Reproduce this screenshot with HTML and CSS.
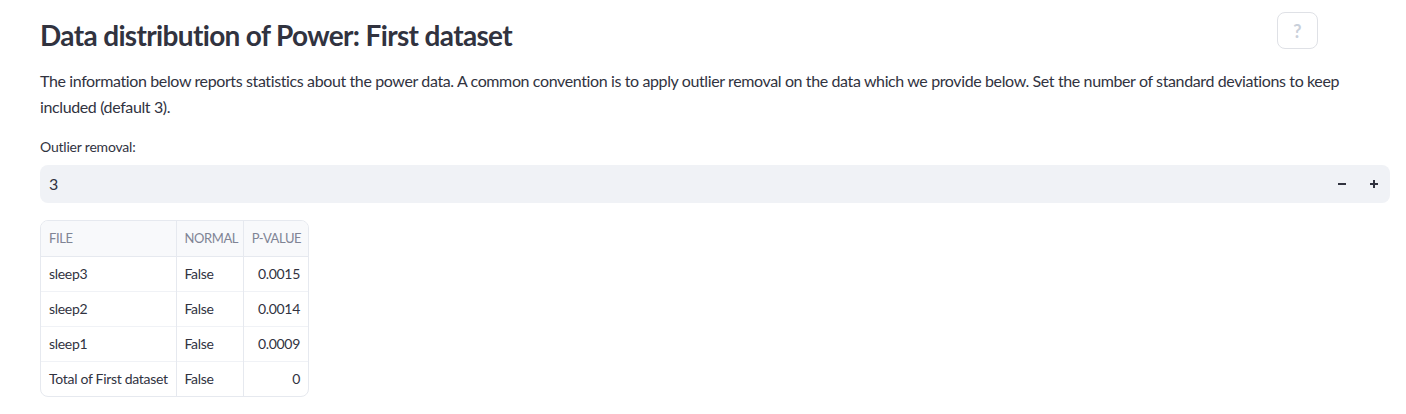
FILE: index.html
```html
<!DOCTYPE html>
<html>
<head>
<meta charset="utf-8">
<link rel="stylesheet" href="styles.css">
</head>
<body>
<div class="page">
  <div class="header-row">
    <h3 class="title">Data distribution of Power: First dataset</h3>
    <button class="help">?</button>
  </div>
  <p class="desc">The information below reports statistics about the power data. A common convention is to apply outlier removal on the data which we provide below. Set the number of standard deviations to keep included (default 3).</p>
  <label class="label">Outlier removal:</label>
  <div class="numinput">
    <span class="value">3</span>
    <div class="steps">
      <span class="step"><svg width="10" height="10" viewBox="0 0 10 10"><rect x="1" y="4" width="8" height="2" fill="#31333f"/></svg></span>
      <span class="step"><svg width="10" height="10" viewBox="0 0 10 10"><rect x="1" y="4" width="8" height="2" fill="#31333f"/><rect x="4" y="1" width="2" height="8" fill="#31333f"/></svg></span>
    </div>
  </div>
  <div class="tablewrap">
    <table class="tbl">
      <thead>
        <tr><th class="c1">FILE</th><th class="c2">NORMAL</th><th class="c3">P-VALUE</th></tr>
      </thead>
      <tbody>
        <tr><td>sleep3</td><td>False</td><td class="num">0.0015</td></tr>
        <tr><td>sleep2</td><td>False</td><td class="num">0.0014</td></tr>
        <tr><td>sleep1</td><td>False</td><td class="num">0.0009</td></tr>
        <tr><td>Total of First dataset</td><td>False</td><td class="num">0</td></tr>
      </tbody>
    </table>
  </div>
</div>
</body>
</html>
```

FILE: styles.css
```css
html, body {
  margin: 0;
  padding: 0;
  background: #ffffff;
}
body {
  font-family: Lato, "Liberation Sans", sans-serif;
  color: #31333f;
}
.page {
  padding: 12px 16px 0 40px;
}
.header-row {
  display: flex;
  justify-content: space-between;
  align-items: flex-start;
}
.title {
  margin: 7px 0 0 0;
  font-size: 28px;
  font-weight: 700;
  line-height: 1.2;
  letter-spacing: -0.65px;
  color: #31333f;
}
.help {
  margin-right: 72px;
  width: 41px;
  height: 37px;
  border: 1px solid #dfe1e6;
  border-radius: 8px;
  background: #fff;
  color: #c9d0da;
  font-family: Lato, sans-serif;
  font-size: 18px;
  font-weight: 700;
  padding: 0;
}
.desc {
  margin: 15px 0 0 0;
  font-size: 16px;
  line-height: 26px;
  letter-spacing: -0.38px;
  color: #31333f;
}
.label {
  display: block;
  margin-top: 17px;
  font-size: 14px;
  line-height: 20px;
  letter-spacing: -0.2px;
}
.numinput {
  margin-top: 8px;
  height: 38px;
  background: #f0f2f6;
  border-radius: 8px;
  display: flex;
  align-items: center;
  justify-content: space-between;
}
.value {
  padding-left: 9px;
  font-size: 16px;
}
.steps {
  display: flex;
}
.step {
  width: 32px;
  height: 38px;
  display: flex;
  align-items: center;
  justify-content: center;
}
.tablewrap {
  margin-top: 17px;
  display: inline-block;
  border: 1px solid #e6e9ef;
  border-radius: 8px;
  overflow: hidden;
}
.tbl {
  border-collapse: collapse;
  table-layout: fixed;
  width: 267px;
  font-size: 14px;
  letter-spacing: -0.3px;
  white-space: nowrap;
}
.tbl th {
  background: #f8f9fb;
  color: #808495;
  font-weight: 400;
  font-size: 13px;
  letter-spacing: -0.4px;
  text-align: left;
  height: 35px;
  padding: 0 8px;
  border-bottom: 1px solid #e6e9ef;
}
.tbl th.c1 { width: 118px; }
.tbl th.c2 { width: 52px; padding: 0 6px 0 8px; }
.tbl th.c3 { width: 50px; padding: 0 6px 0 8px; }
.tbl th + th, .tbl td + td {
  border-left: 1px solid #e6e9ef;
}
.tbl td {
  height: 34px;
  padding: 0 8px;
  border-top: 1px solid #f0f2f6;
}
.tbl tbody tr:first-child td {
  border-top: none;
}
.tbl td.num {
  text-align: right;
}
```
